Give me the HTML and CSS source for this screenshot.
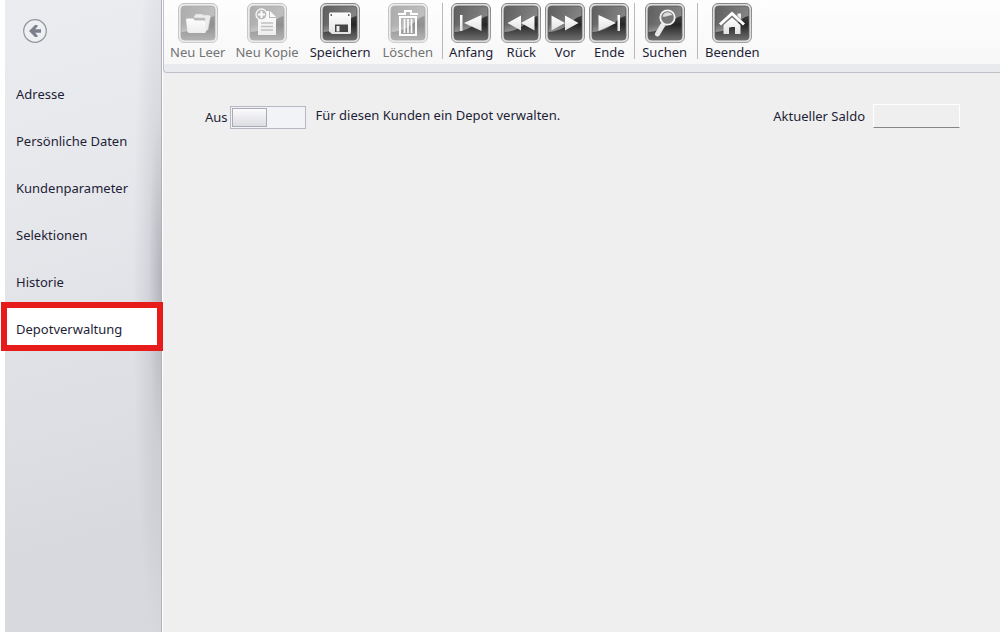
FILE: index.html
```html
<!DOCTYPE html>
<html lang="de">
<head>
<meta charset="utf-8">
<meta name="viewport" content="width=device-width, initial-scale=1">
<title>Depotverwaltung</title>
<link rel="stylesheet" href="styles.css">
</head>
<body>
<svg class="defs" width="0" height="0" aria-hidden="true">
  <defs>
    <linearGradient id="frame" x1="0" y1="0" x2="0" y2="1"><stop offset="0" stop-color="#858585"/><stop offset="1" stop-color="#a0a0a0"/></linearGradient>
    <linearGradient id="face" x1="0" y1="0" x2="0" y2="1"><stop offset="0" stop-color="#555"/><stop offset=".55" stop-color="#262626"/><stop offset="1" stop-color="#6e6e6e"/></linearGradient>
    <linearGradient id="gloss" x1="0" y1="0" x2="0.6" y2="1"><stop offset="0" stop-color="#fff" stop-opacity=".08"/><stop offset="1" stop-color="#fff" stop-opacity=".5"/></linearGradient>
    <linearGradient id="glyph" x1="0" y1="0" x2="0" y2="1"><stop offset="0" stop-color="#fff"/><stop offset="1" stop-color="#e2e2e2"/></linearGradient>
    <symbol id="tile" viewBox="0 0 40 40">
      <rect x=".5" y=".5" width="39" height="39" rx="5.5" fill="#dcdcdc" stroke="url(#frame)"/>
      <rect x="3" y="3" width="34" height="34" rx="3.5" fill="url(#face)" stroke="#666" stroke-width=".8"/>
      <path d="M3.500 6.500a3 3 0 0 1 3-3h27a3 3 0 0 1 3 3V13C29 14 25 23 16 26C11 28 7 29 3.500 29Z" fill="url(#gloss)"/>
    </symbol>
  </defs>
</svg>
<div class="app">
  <aside class="sidebar">
    <button class="back" type="button" aria-label="Zurück">
      <svg viewBox="0 0 24 24" width="24" height="24"><circle cx="12" cy="12" r="11.300" fill="#eeeff3" stroke="#92949c" stroke-width="1.200"/><path d="M6 12l6-6h2.500v1.500L12.200 10.300H18v3.400h-5.800l2.300 2.800V18H12Z" fill="#7d808b"/></svg>
    </button>
    <nav class="menu">
      <a class="menu-item" href="#adresse">Adresse</a>
      <a class="menu-item" href="#daten">Persönliche Daten</a>
      <a class="menu-item" href="#parameter">Kundenparameter</a>
      <a class="menu-item" href="#selektionen">Selektionen</a>
      <a class="menu-item" href="#historie">Historie</a>
      <a class="menu-item active" href="#depot" aria-current="page">Depotverwaltung</a>
    </nav>
  </aside>
  <div class="workspace">
    <header class="toolbar">
      <div class="group">
        <button class="tool narrow" type="button" disabled>
          <svg class="icon" viewBox="0 0 40 40"><use href="#tile"/><path d="M16 13.500l2-2.500h6l1.500 1H31l1.500 1.500L30 27l-3 1V15H16Z" fill="#ddd" stroke="#888" stroke-width=".5"/><path d="M8 16.500l1-1h6l2 2h9l1.500 1L28 29l-1 1H11l-1.500-1Z" fill="url(#glyph)"/></svg>
          <span>Neu Leer</span>
        </button>
        <button class="tool narrow" type="button" disabled>
          <svg class="icon" viewBox="0 0 40 40"><use href="#tile"/><path d="M11 8h11v7h7v17H11Z" fill="url(#glyph)"/><path d="M23 8l6 6h-6Z" fill="#fff"/><path d="M14 20h12M14 23.500h12M14 27h12" stroke="#888" stroke-width="1.300"/><circle cx="14.500" cy="11.500" r="5.500" fill="#777" stroke="#f5f5f5" stroke-width="1.300"/><path d="M14.500 8v7M11 11.500h7" stroke="#fff" stroke-width="2"/></svg>
          <span>Neu Kopie</span>
        </button>
        <button class="tool" type="button">
          <svg class="icon" viewBox="0 0 40 40"><use href="#tile"/><path d="M10 9.500h20l1 1V30l-1 1H12l-3-2.500v-18Z" fill="url(#glyph)"/><path d="M10.500 12H12M28 12h1.500" stroke="#333" stroke-width="1.500"/><path d="M15 21.500h13V29H15Z" fill="#444"/><path d="M16.500 23h3v5.500h-3Z" fill="#eee"/></svg>
          <span>Speichern</span>
        </button>
        <button class="tool" type="button" disabled>
          <svg class="icon" viewBox="0 0 40 40"><use href="#tile"/><path d="M10 11h7V8h6v3h7" fill="none" stroke="#fff" stroke-width="2"/><path d="M12 14h16v18H12Z" fill="none" stroke="#fff" stroke-width="2"/><path d="M16.500 16v14M20 16v14M23.500 16v14" stroke="#fff" stroke-width="1.700"/></svg>
          <span>Löschen</span>
        </button>
      </div>
      <div class="group compact">
        <button class="tool" type="button">
          <svg class="icon" viewBox="0 0 40 40"><use href="#tile"/><path d="M9 12h2.500v16H9ZM30.500 12v16L13 20Z" fill="url(#glyph)"/></svg>
          <span>Anfang</span>
        </button>
        <button class="tool" type="button">
          <svg class="icon" viewBox="0 0 40 40"><use href="#tile"/><path d="M20 12.500v15L6.500 20ZM33.500 12.500v15L20 20Z" fill="url(#glyph)"/></svg>
          <span>Rück</span>
        </button>
        <button class="tool" type="button">
          <svg class="icon" viewBox="0 0 40 40"><use href="#tile"/><path d="M6.500 12.500v15L20 20ZM20 12.500v15L33.500 20Z" fill="url(#glyph)"/></svg>
          <span>Vor</span>
        </button>
        <button class="tool" type="button">
          <svg class="icon" viewBox="0 0 40 40"><use href="#tile"/><path d="M9.500 12v16L27 20ZM28.500 12H31v16h-2.500Z" fill="url(#glyph)"/></svg>
          <span>Ende</span>
        </button>
      </div>
      <div class="group single">
        <button class="tool" type="button">
          <svg class="icon" viewBox="0 0 40 40"><use href="#tile"/><path d="M17.500 22.500l-5 8.500" stroke="#e8e8e8" stroke-width="5" stroke-linecap="round"/><circle cx="22.500" cy="14.500" r="7.200" fill="#777" stroke="#f2f2f2" stroke-width="1.800"/><path d="M17.500 13.500c1-5 8-6 10-1-3-1-6 2-10 1Z" fill="#ddd"/></svg>
          <span>Suchen</span>
        </button>
      </div>
      <div class="group single">
        <button class="tool" type="button">
          <svg class="icon" viewBox="0 0 40 40"><use href="#tile"/><path d="M25.500 10.500H29V16l-3.500-3Z" fill="#eee"/><path d="M8 21.500L20 10.500l12 11" fill="none" stroke="#fff" stroke-width="3"/><path d="M11.500 22L20 14.500l8.500 7.500v9H23v-7h-6v7h-5.500Z" fill="url(#glyph)"/></svg>
          <span>Beenden</span>
        </button>
      </div>
    </header>
    <main class="content">
      <div class="depot">
        <label for="depot-switch">Aus</label>
        <input class="switch" id="depot-switch" type="checkbox" role="switch" aria-describedby="depot-text">
        <span class="hint" id="depot-text">Für diesen Kunden ein Depot verwalten.</span>
      </div>
      <div class="saldo">
        <label for="saldo">Aktueller Saldo</label>
        <input class="amount" id="saldo" type="text" readonly>
      </div>
    </main>
  </div>
</div>
</body>
</html>
```
FILE: styles.css
```css
* { box-sizing: border-box; }
body {
  margin: 0;
  background: #fff;
  color: #1e1e37;
  font: 13px/18px Tahoma, "Noto Sans", sans-serif;
}
button, input { font: inherit; color: inherit; }
.defs { position: absolute; }
.app {
  display: grid;
  grid-template-columns: 157px 1fr;
  gap: 1px;
  min-height: 100vh;
  padding-left: 5px;
}
.sidebar {
  border-right: 1px solid #b0b1b9;
  background:
    radial-gradient(ellipse 28px 60% at 100% 44%, rgba(80, 82, 95, .32), rgba(80, 82, 95, .1) 45%, transparent),
    linear-gradient(165deg, #ebecf0, #e7e8ec 30%, #d8d9de 85%);
}
.back {
  display: block;
  margin: 19px 0 26px 18px;
  padding: 0;
  border: 0;
  background: none;
  height: 24px;
}
.menu { display: flex; flex-direction: column; }
.menu-item {
  position: relative;
  padding: 16px 11px 13px;
  color: inherit;
  text-decoration: none;
}
.active { background: #fff; }
.active::after {
  content: "";
  position: absolute;
  inset: -2px -2px 0 -4px;
  border: 6px solid #e81b1b;
}
.workspace { background: #efefef; }
.toolbar {
  display: flex;
  height: 73px;
  padding: 3px 0 0 1px;
  border: solid #bfc0c9;
  border-width: 0 0 1px 1px;
  border-bottom-left-radius: 4px;
  background: linear-gradient(#fefefe, #f7f7f8 64px, #e9eaee 64px);
}
.group {
  display: flex;
  height: 56px;
}
.group + .group {
  margin-left: 3px;
  padding-left: 1px;
  background: linear-gradient(#b9b9bd, #b9b9bd) left / 1px 100% no-repeat;
}
.tool {
  display: flex;
  flex-direction: column;
  align-items: center;
  min-width: 44px;
  padding: 0 6px;
  border: 0;
  background: none;
}
.narrow { padding: 0 5px; }
.single .tool { padding: 0 7px; }
.compact .tool { padding: 0; }
.compact .tool:first-child { padding: 0 6px; }
.icon { flex: none; width: 40px; height: 40px; }
.tool:disabled { color: #737373; }
.tool:disabled .icon { opacity: .5; }
.content {
  display: flex;
  justify-content: space-between;
  padding: 31px 40px 0 42px;
}
.depot, .saldo { display: flex; align-items: center; }
.depot { gap: 2px; height: 26px; }
.hint { margin-left: 8px; padding-bottom: 4px; }
.switch {
  appearance: none;
  width: 76px;
  height: 23px;
  margin: 0;
  padding: 1px;
  border: 1px solid #b7b8c4;
  background: #f2f3f6;
}
.switch::before {
  content: "";
  display: block;
  box-sizing: border-box;
  width: 35px;
  height: 19px;
  border: 1px solid #a9aab4;
  background: linear-gradient(#fbfbfc, #dcdde2);
}
.switch:checked::before { margin-left: auto; }
.saldo { gap: 8px; height: 24px; }
.amount {
  width: 87px;
  height: 24px;
  border: 1px solid #fff;
  border-bottom-color: #858585;
  background: #efefef;
}
```
